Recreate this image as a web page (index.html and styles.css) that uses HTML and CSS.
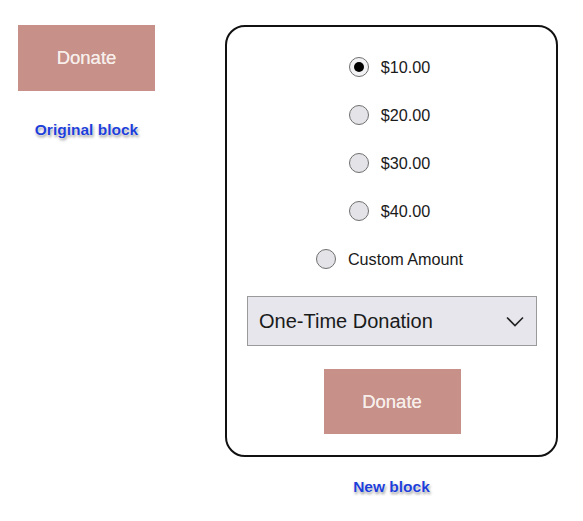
FILE: index.html
```html
<!DOCTYPE html>
<html>
<head>
<meta charset="utf-8">
<link rel="stylesheet" href="styles.css">
</head>
<body>
<div class="page">
  <div class="col col-left">
    <div class="btn">Donate</div>
    <div class="label label-orig">Original block</div>
  </div>
  <div class="col col-right">
    <div class="card">
      <div class="options">
        <div class="opt"><span class="radio checked"></span><span>$10.00</span></div>
        <div class="opt"><span class="radio"></span><span>$20.00</span></div>
        <div class="opt"><span class="radio"></span><span>$30.00</span></div>
        <div class="opt"><span class="radio"></span><span>$40.00</span></div>
        <div class="opt"><span class="radio"></span><span>Custom Amount</span></div>
      </div>
      <div class="select">
        <span>One-Time Donation</span>
        <svg class="chev" width="18" height="11" viewBox="0 0 18 11"><path d="M1 1.5 L9 9.5 L17 1.5" fill="none" stroke="#222" stroke-width="1.6"/></svg>
      </div>
      <div class="btn btn-card">Donate</div>
    </div>
    <div class="label label-new">New block</div>
  </div>
</div>
</body>
</html>
```

FILE: styles.css
```css
html, body {
  margin: 0;
  padding: 0;
  background: #fff;
  font-family: "Liberation Sans", Arial, sans-serif;
}
.page {
  display: flex;
  align-items: flex-start;
  padding-top: 25px;
}
.col {
  display: flex;
  flex-direction: column;
  align-items: center;
}
.col-left {
  margin-left: 18px;
  width: 137px;
}
.col-right {
  margin-left: 70px;
  width: 333px;
}
.btn {
  width: 137px;
  height: 66px;
  background: #c7918a;
  color: #f7eeea;
  font-size: 18.5px;
  text-shadow: 0 0 0.6px #f7eeea;
  display: flex;
  align-items: center;
  justify-content: center;
  box-sizing: border-box;
}
.label {
  color: #1d3fd9;
  font-weight: bold;
  font-size: 15.5px;
  text-shadow: 0 0 1px #fff, 0 0 2px #fff, 1px 2px 3px rgba(0,0,0,0.45);
}
.label-orig {
  margin-top: 30px;
}
.label-new {
  margin-top: 21px;
}
.card {
  width: 333px;
  height: 432px;
  box-sizing: border-box;
  border: 2px solid #111;
  border-radius: 20px;
  padding: 16px 19px 0 20px;
  display: flex;
  flex-direction: column;
  align-items: center;
}
.options {
  display: flex;
  flex-direction: column;
  align-items: center;
  margin-right: 5px;
}
.opt {
  height: 48px;
  display: flex;
  align-items: center;
  gap: 12px;
  font-size: 16.2px;
  color: #1a1a1a;
}
.radio {
  width: 20px;
  height: 20px;
  box-sizing: border-box;
  border: 1px solid #6f6f6f;
  border-radius: 50%;
  background: #e3e3e8;
  display: flex;
  align-items: center;
  justify-content: center;
}
.radio.checked {
  background: #f2f2f4;
}
.radio.checked::after {
  content: "";
  width: 10px;
  height: 10px;
  border-radius: 50%;
  background: #000;
}
.select {
  margin-top: 13px;
  align-self: stretch;
  height: 50px;
  box-sizing: border-box;
  border: 1px solid #9a9a9a;
  background: #e6e6ec;
  display: flex;
  align-items: center;
  justify-content: space-between;
  padding: 0 12px 0 11px;
  font-size: 20px;
  color: #1a1a1a;
}
.btn-card {
  margin-top: 23px;
  height: 65px;
}
```
